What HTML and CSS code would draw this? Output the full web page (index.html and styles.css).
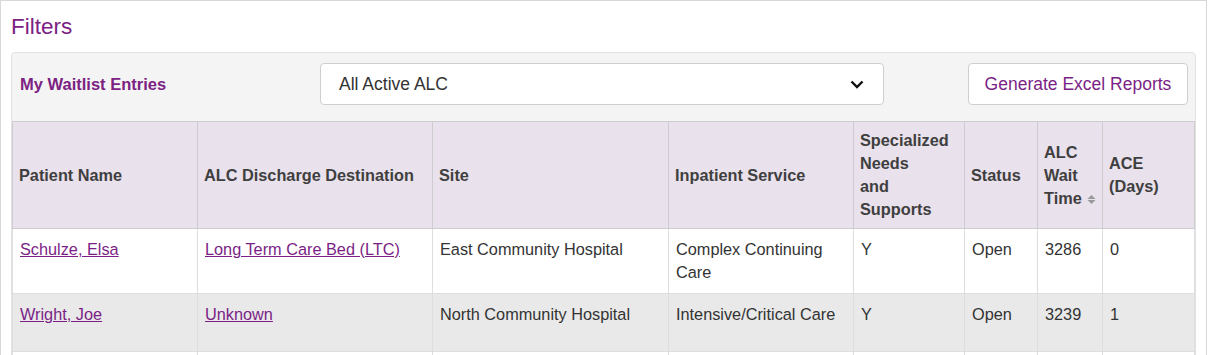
FILE: index.html
```html
<!DOCTYPE html>
<html lang="en">
<head>
<meta charset="utf-8">
<title>Filters</title>
<link rel="stylesheet" href="styles.css">
</head>
<body>
<div class="page">
  <h2 class="title">Filters</h2>
  <div class="panel">
    <div class="toolbar">
      <div class="label">My Waitlist Entries</div>
      <div class="select">
        <span>All Active ALC</span>
        <svg class="chev" width="14" height="9" viewBox="0 0 14 9"><path d="M1.5 1.5 L7 7 L12.5 1.5" fill="none" stroke="#111" stroke-width="2.4"/></svg>
      </div>
      <button class="btn">Generate Excel Reports</button>
    </div>
    <table class="grid">
      <colgroup>
        <col class="c1"><col class="c2"><col class="c3"><col class="c4"><col class="c5"><col class="c6"><col class="c7"><col class="c8">
      </colgroup>
      <thead>
        <tr>
          <th class="first">Patient Name</th>
          <th>ALC Discharge Destination</th>
          <th>Site</th>
          <th>Inpatient Service</th>
          <th>Specialized<br>Needs<br>and<br>Supports</th>
          <th>Status</th>
          <th>ALC<br>Wait<br>Time <svg class="sort" width="9" height="11" viewBox="0 0 9 11"><path d="M4.5 1 L8.5 5 H0.5 Z M4.5 10 L8.5 6 H0.5 Z" fill="#999999"/></svg></th>
          <th>ACE<br>(Days)</th>
        </tr>
      </thead>
      <tbody>
        <tr class="r1">
          <td class="first"><a href="#">Schulze, Elsa</a></td>
          <td><a href="#">Long Term Care Bed (LTC)</a></td>
          <td>East Community Hospital</td>
          <td>Complex Continuing Care</td>
          <td>Y</td>
          <td>Open</td>
          <td>3286</td>
          <td>0</td>
        </tr>
        <tr class="r2 alt">
          <td class="first"><a href="#">Wright, Joe</a></td>
          <td><a href="#">Unknown</a></td>
          <td>North Community Hospital</td>
          <td>Intensive/Critical Care</td>
          <td>Y</td>
          <td>Open</td>
          <td>3239</td>
          <td>1</td>
        </tr>
        <tr class="r3">
          <td class="first"></td><td></td><td></td><td></td><td></td><td></td><td></td><td></td>
        </tr>
      </tbody>
    </table>
  </div>
</div>
</body>
</html>
```

FILE: styles.css
```css
html, body {
  margin: 0;
  padding: 0;
  overflow: hidden;
  background: #ffffff;
}

body {
  font-family: "Liberation Sans", Arial, sans-serif;
  color: #333333;
}

.page {
  box-sizing: border-box;
  width: 1207px;
  height: 360px;
  overflow: hidden;
  border: 1px solid #d8d8d8;
  border-bottom: 0;
  padding: 13px 10px 0 10px;
}

.title {
  margin: 0 0 12px 0;
  font-size: 22.5px;
  line-height: 26px;
  font-weight: normal;
  color: #7b2283;
}

.panel {
  box-sizing: border-box;
  width: 1185px;
  background: #f4f4f4;
  border: 1px solid #e2e2e2;
  border-radius: 4px;
}

.toolbar {
  display: flex;
  align-items: center;
  padding: 10px 7px 16px 8px;
}

.label {
  width: 300px;
  font-size: 16.5px;
  font-weight: bold;
  color: #7b2283;
}

.select {
  box-sizing: border-box;
  width: 564px;
  height: 42px;
  display: flex;
  align-items: center;
  justify-content: space-between;
  padding: 0 19px 0 18px;
  background: #ffffff;
  border: 1px solid #cfcfcf;
  border-radius: 4px;
  font-size: 17.5px;
  color: #333333;
}

.chev {
  display: block;
}

.btn {
  box-sizing: border-box;
  margin-left: auto;
  width: 220px;
  height: 42px;
  background: #ffffff;
  border: 1px solid #cfcfcf;
  border-radius: 4px;
  font-family: "Liberation Sans", Arial, sans-serif;
  font-size: 17.5px;
  color: #7b1f86;
  padding: 0;
}

.grid {
  border-collapse: separate;
  border-spacing: 0;
  table-layout: fixed;
  width: 1183px;
  font-size: 16.3px;
  line-height: 23px;
}

.c1 { width: 186px; }
.c2 { width: 235px; }
.c3 { width: 236px; }
.c4 { width: 185px; }
.c5 { width: 111px; }
.c6 { width: 73px; }
.c7 { width: 65px; }
.c8 { width: 92px; }

.grid th,
.grid td {
  box-sizing: border-box;
  text-align: left;
  padding: 0 5px 0 7px;
}

.grid th {
  background: #e9e1ec;
  color: #3f3f3f;
  font-weight: bold;
  vertical-align: middle;
  padding-top: 7px;
  padding-bottom: 7px;
  padding-left: 6px;
  border-top: 1px solid #cdcdcd;
  border-right: 1px solid #cdcdcd;
  border-bottom: 1px solid #cdcdcd;
}

.grid th.first {
  border-left: 1px solid #cdcdcd;
}

.grid td {
  vertical-align: top;
  padding-top: 9px;
  background: #ffffff;
  color: #333333;
  border-right: 1px solid #dedede;
  border-bottom: 1px solid #dedede;
}

.grid td.first {
  border-left: 1px solid #dedede;
}

.grid tr.alt td {
  background: #e9e9e9;
}

.grid tr.r1 { height: 65px; }
.grid tr.r2 { height: 58px; }
.grid tr.r3 { height: 60px; }

.grid a {
  color: #7b1f86;
  text-decoration: underline;
}

.sort {
  display: inline-block;
  vertical-align: -1px;
  margin-left: 1px;
}
```
